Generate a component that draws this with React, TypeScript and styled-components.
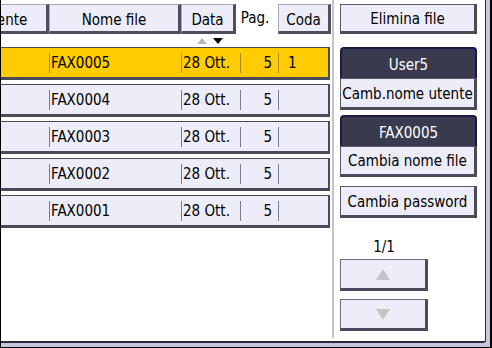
import React from 'react';
import styled, { createGlobalStyle } from 'styled-components';

type FileEntry = {
  name: string;
  date: string;
  pages: number;
  queue?: string;
};

const files: FileEntry[] = [
  { name: 'FAX0005', date: '28 Ott.', pages: 5, queue: '1' },
  { name: 'FAX0004', date: '28 Ott.', pages: 5 },
  { name: 'FAX0003', date: '28 Ott.', pages: 5 },
  { name: 'FAX0002', date: '28 Ott.', pages: 5 },
  { name: 'FAX0001', date: '28 Ott.', pages: 5 },
];

const SortArrow: React.FC<{ dir: 'up' | 'down'; color: string }> = ({ dir, color }) => (
  <svg width="10" height="6" viewBox="0 0 10 6">
    <polygon points={dir === 'up' ? '5,0 10,6 0,6' : '0,0 10,0 5,6'} fill={color} />
  </svg>
);

const PageArrow: React.FC<{ dir: 'up' | 'down' }> = ({ dir }) => (
  <svg width="14" height="11" viewBox="0 0 14 11">
    <polygon points={dir === 'up' ? '7,0 14,11 0,11' : '0,0 14,0 7,11'} fill="#c4c4c8" />
  </svg>
);

const App: React.FC = () => {
  const selected = 0;

  return (
    <>
      <GlobalStyle />
      <Screen>
        <Panel>
          <ListPane>
            <HeaderRow>
              <HeaderButton $w={87}>Utente</HeaderButton>
              <HeaderButton $w={132}>Nome file</HeaderButton>
              <HeaderButton $w={55}>Data</HeaderButton>
              <PagLabel>Pag.</PagLabel>
              <HeaderButton $w={53}>Coda</HeaderButton>
            </HeaderRow>

            <SortRow>
              <SortArrow dir="up" color="#b8b8bc" />
              <SortArrow dir="down" color="#000" />
            </SortRow>

            <RowList>
              {files.map((f, i) => (
                <FileRow key={f.name} $selected={i === selected}>
                  <UserCell />
                  <Cell $w={132} $selected={i === selected}>{f.name}</Cell>
                  <Cell $w={59} $selected={i === selected}>{f.date}</Cell>
                  <PagesCell $selected={i === selected}>{f.pages}</PagesCell>
                  <QueueCell $selected={i === selected}>{f.queue}</QueueCell>
                </FileRow>
              ))}
            </RowList>
          </ListPane>

          <Divider />

          <SidePane>
            <Group $mt={4}>
              <SideButton $h={30}>Elimina file</SideButton>
            </Group>
            <Group $mt={13}>
              <DarkLabel>User5</DarkLabel>
              <SideButton $h={32}>Camb.nome utente</SideButton>
            </Group>
            <Group $mt={5}>
              <DarkLabel>FAX0005</DarkLabel>
              <SideButton $h={31}>Cambia nome file</SideButton>
            </Group>
            <Group $mt={9}>
              <SideButton $h={32}>Cambia password</SideButton>
            </Group>
            <Pager>
              <PageCount>1/1</PageCount>
              <PageButton>
                <PageArrow dir="up" />
              </PageButton>
              <PageButton>
                <PageArrow dir="down" />
              </PageButton>
            </Pager>
          </SidePane>
        </Panel>
      </Screen>
    </>
  );
};

// Styled components
const GlobalStyle = createGlobalStyle`
  html, body {
    margin: 0;
    padding: 0;
    background: #fff;
  }
  body {
    font-family: "DejaVu Sans Condensed", "Liberation Sans", Arial, sans-serif;
    font-size: 15px;
    color: #000;
  }
`;

const Screen = styled.div`
  width: 492px;
  height: 348px;
  box-sizing: border-box;
  background: #c6c6de;
  border-left: 1px solid #000;
  border-right: 2px solid #000;
  border-bottom: 1px solid #000;
  padding: 0 4px 4px 0;
`;

const Panel = styled.div`
  display: flex;
  height: 100%;
  box-sizing: border-box;
  background: #fff;
  border-right: 1px solid #2c2c3c;
  border-bottom: 2px solid #2c2c3c;
  border-bottom-right-radius: 3px;
`;

const ListPane = styled.div`
  width: 331px;
  flex-shrink: 0;
  overflow: hidden;
  display: flex;
  flex-direction: column;
`;

const HeaderRow = styled.div`
  display: flex;
  align-items: stretch;
  height: 30px;
  margin-top: 4px;
  margin-left: -39px;
`;

const HeaderButton = styled.div<{ $w: number }>`
  width: ${({ $w }) => $w}px;
  flex-shrink: 0;
  box-sizing: border-box;
  display: flex;
  align-items: center;
  justify-content: center;
  padding-top: 4px;
  background: #ededf9;
  border-top: 1px solid #a8a8b8;
  border-left: 1px solid #a8a8b8;
  border-right: 3px solid #4e4e5e;
  border-bottom: 3px solid #4e4e5e;
`;

const PagLabel = styled.div`
  width: 42px;
  flex-shrink: 0;
  display: flex;
  align-items: center;
  justify-content: center;
  padding: 0 4px 2px 0;
  box-sizing: border-box;
`;

const SortRow = styled.div`
  display: flex;
  gap: 6px;
  height: 6px;
  margin: 4px 0 2px;
  padding-left: 196px;
`;

const RowList = styled.div`
  display: flex;
  flex-direction: column;
  gap: 4px;
  margin-top: 1px;
`;

const FileRow = styled.div<{ $selected: boolean }>`
  display: flex;
  align-items: center;
  width: 369px;
  height: 33px;
  margin-left: -40px;
  box-sizing: border-box;
  padding-top: 1px;
  background: ${({ $selected }) => ($selected ? '#ffcc00' : '#ededf9')};
  border-top: 1px solid #4a4a5a;
  border-left: 1px solid #4a4a5a;
  border-right: 2px solid #4a4a5a;
  border-bottom: 3px solid #4a4a5a;
`;

const UserCell = styled.div`
  width: 87px;
  flex-shrink: 0;
`;

const Cell = styled.div<{ $w?: number; $selected: boolean }>`
  width: ${({ $w }) => ($w ? `${$w}px` : 'auto')};
  flex-shrink: 0;
  box-sizing: border-box;
  height: 20px;
  display: flex;
  align-items: center;
  padding-left: 1px;
  border-left: 1px solid ${({ $selected }) => ($selected ? '#b08a00' : '#7c7c8c')};
`;

const PagesCell = styled(Cell)`
  width: 38px;
  justify-content: flex-end;
  padding-right: 6px;
`;

const QueueCell = styled(Cell)`
  flex: 1;
  padding-left: 9px;
`;

const Divider = styled.div`
  width: 2px;
  flex-shrink: 0;
  background: #c4c4c4;
  margin-bottom: 3px;
`;

const SidePane = styled.div`
  display: flex;
  flex-direction: column;
  padding-left: 6px;
`;

const Group = styled.div<{ $mt: number }>`
  display: flex;
  flex-direction: column;
  margin-top: ${({ $mt }) => $mt}px;
`;

const SideButton = styled.div<{ $h: number }>`
  width: 137px;
  height: ${({ $h }) => $h}px;
  box-sizing: border-box;
  display: flex;
  align-items: center;
  justify-content: center;
  padding-top: 1px;
  background: #ededf9;
  border: 1px solid #5a5a6a;
  border-right: 3px solid #4a4a5a;
  border-bottom: 3px solid #4a4a5a;
  white-space: nowrap;
`;

const DarkLabel = styled.div`
  width: 137px;
  height: 31px;
  box-sizing: border-box;
  display: flex;
  align-items: center;
  justify-content: center;
  padding-top: 2px;
  background: #3a3a4e;
  color: #fff;
  border: 2px solid #1a1a44;
  border-bottom: none;
  border-radius: 4px 4px 0 0;
`;

const Pager = styled.div`
  width: 88px;
  display: flex;
  flex-direction: column;
  align-items: center;
  gap: 8px;
  margin-top: 21px;
`;

const PageCount = styled.div`
  height: 16px;
  line-height: 16px;
  margin-bottom: -4px;
`;

const PageButton = styled.div`
  width: 88px;
  height: 32px;
  box-sizing: border-box;
  display: flex;
  align-items: center;
  justify-content: center;
  background: #ededf9;
  border: 1px solid #6a6a7a;
  border-right: 3px solid #4a4a5a;
  border-bottom: 3px solid #4a4a5a;
`;

export default App;
